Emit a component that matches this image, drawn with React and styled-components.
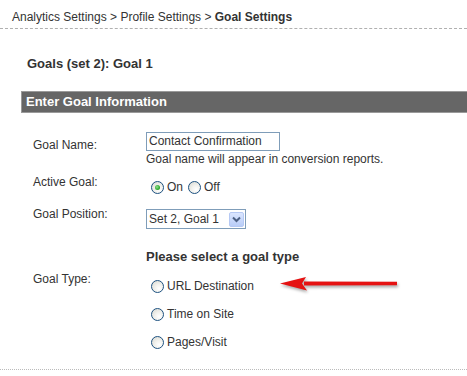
import React from 'react';
import styled, { createGlobalStyle } from 'styled-components';

const GlobalStyle = createGlobalStyle`
    html, body {
        margin: 0;
        padding: 0;
        background: #fff;
    }
    body {
        font-family: "Liberation Sans", Arial, sans-serif;
        font-size: 12px;
        color: #333;
        overflow: hidden;
    }
`;

const Page = styled.div`
    position: relative;
    width: 467px;
    height: 376px;
    overflow: hidden;
`;

const Breadcrumb = styled.div`
    padding: 10px 12px 4px;
    line-height: 14px;
    border-bottom: 1px dashed #b0b0b0;
    b {
        font-weight: bold;
    }
`;

const Title = styled.h2`
    margin: 27px 0 0 27px;
    font-size: 13px;
    line-height: 16px;
    font-weight: bold;
`;

const SectionBar = styled.div`
    margin: 19px 0 0 21px;
    height: 20px;
    line-height: 20px;
    padding-left: 4px;
    background: #666;
    border: 1px solid #9a9a9a;
    border-right: none;
    color: #fff;
    font-size: 13px;
    font-weight: bold;
`;

const Form = styled.div`
    display: flex;
    flex-direction: column;
    padding-top: 19px;
`;

const Row = styled.div`
    display: flex;
    align-items: flex-start;
    margin-top: ${p => p.$top || 0}px;
`;

const Label = styled.div`
    width: 146px;
    box-sizing: border-box;
    padding: ${p => p.$pad || 0}px 0 0 33px;
    line-height: 14px;
`;

const Field = styled.div`
    display: flex;
    flex-direction: column;
    padding-top: ${p => p.$pad || 0}px;
`;

const TextInput = styled.div`
    width: 130px;
    height: 17px;
    border: 1px solid #7f9db9;
    padding-left: 2px;
    box-sizing: content-box;
    line-height: 17px;
    font-size: 12px;
`;

const Hint = styled.div`
    line-height: 14px;
    margin-top: 1px;
`;

const RadioGroup = styled.div`
    display: flex;
    align-items: center;
    gap: ${p => p.$gap || 0}px;
`;

const RadioItem = styled.label`
    display: flex;
    align-items: center;
    line-height: 14px;
    font-size: 12px;
`;

const RadioCircle = styled.span`
    position: relative;
    width: 11px;
    height: 11px;
    margin: 0 3px 0 5px;
    border-radius: 50%;
    border: 1px solid #1c5180;
    background: radial-gradient(circle at 65% 70%, #ffffff 0%, #f2f2ee 40%, #d6d6cf 100%);
    flex: none;
    &::after {
        content: '';
        display: ${p => (p.$checked ? 'block' : 'none')};
        position: absolute;
        left: 3px;
        top: 3px;
        width: 5px;
        height: 5px;
        border-radius: 50%;
        background: radial-gradient(circle at 40% 40%, #8fe08f 0%, #21a121 70%, #1a7d1a 100%);
    }
`;

const Select = styled.div`
    display: flex;
    align-items: center;
    justify-content: space-between;
    width: 95px;
    height: 18px;
    margin-top: 2px;
    border: 1px solid #7f9db9;
    padding: 0 1px 0 2px;
    line-height: 18px;
`;

const SelectButton = styled.span`
    display: flex;
    align-items: center;
    justify-content: center;
    width: 15px;
    height: 15px;
    border: 1px solid #b6c9f4;
    border-radius: 2px;
    background: linear-gradient(#dbe6ff, #b9cdf8);
    box-sizing: border-box;
`;

const GoalTypeHeading = styled.div`
    font-size: 13px;
    line-height: 16px;
    font-weight: bold;
`;

const TypeList = styled.div`
    display: flex;
    flex-direction: column;
    gap: 14px;
    margin-top: 14px;
`;

const Divider = styled.div`
    margin-top: 20px;
    border-top: 1px dotted #bbb;
`;

const Arrow = styled.svg`
    position: absolute;
    left: 276px;
    top: 272px;
    filter: drop-shadow(1px 2px 1.5px rgba(0, 0, 0, 0.35));
`;

const Radio = ({ checked, children }) => (
    <RadioItem>
        <RadioCircle $checked={checked} />
        {children}
    </RadioItem>
);

const App = () => {
    return (
        <Page>
            <GlobalStyle />
            <Breadcrumb>
                Analytics Settings &gt; Profile Settings &gt; <b>Goal Settings</b>
            </Breadcrumb>
            <Title>Goals (set 2): Goal 1</Title>
            <SectionBar>Enter Goal Information</SectionBar>
            <Form>
                <Row>
                    <Label $pad={6}>Goal Name:</Label>
                    <Field>
                        <TextInput>Contact Confirmation</TextInput>
                        <Hint>Goal name will appear in conversion reports.</Hint>
                    </Field>
                </Row>
                <Row $top={6}>
                    <Label $pad={3}>Active Goal:</Label>
                    <Field $pad={8}>
                        <RadioGroup $gap={0}>
                            <Radio checked>On</Radio>
                            <Radio>Off</Radio>
                        </RadioGroup>
                    </Field>
                </Row>
                <Row $top={13}>
                    <Label $pad={0}>Goal Position:</Label>
                    <Field>
                        <Select>
                            Set 2, Goal 1
                            <SelectButton>
                                <svg width="9" height="7" viewBox="0 0 9 7">
                                    <path d="M1 1.5 L4.5 5 L8 1.5" fill="none" stroke="#4d6185" strokeWidth="2" />
                                </svg>
                            </SelectButton>
                        </Select>
                    </Field>
                </Row>
                <Row $top={20}>
                    <Label $pad={23}>Goal Type:</Label>
                    <Field>
                        <GoalTypeHeading>Please select a goal type</GoalTypeHeading>
                        <TypeList>
                            <Radio>URL Destination</Radio>
                            <Radio>Time on Site</Radio>
                            <Radio>Pages/Visit</Radio>
                        </TypeList>
                    </Field>
                </Row>
            </Form>
            <Divider />
            <Arrow width="126" height="24" viewBox="0 0 126 24">
                <path d="M28 9.5 L121 9.8 L121 13.2 L28 13.5 Z" fill="#e51212" />
                <path d="M4 11.5 L30 5 L26 11.5 L31 18.5 Z" fill="#e51212" />
            </Arrow>
        </Page>
    );
};

export default App;
